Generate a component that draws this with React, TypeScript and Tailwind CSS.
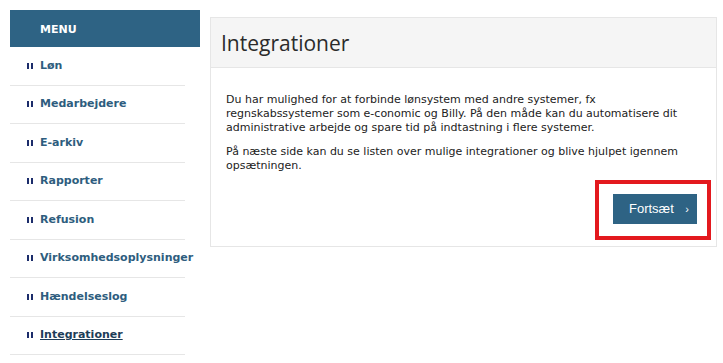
const menuItems = [
  "Løn",
  "Medarbejdere",
  "E-arkiv",
  "Rapporter",
  "Refusion",
  "Virksomhedsoplysninger",
  "Hændelseslog",
  "Integrationer",
];

function Bullet() {
  return (
    <span className="flex gap-[2px] mr-[7px]">
      <span className="w-[2px] h-[6px] bg-[#1c2d6b]" />
      <span className="w-[2px] h-[6px] bg-[#1c2d6b]" />
    </span>
  );
}

function Sidebar() {
  return (
    <aside className="w-[190px] shrink-0">
      <div className="h-[37px] bg-[#2e6384] flex items-center pl-[30px] pt-[3px] text-white font-bold text-[11px]">
        MENU
      </div>
      <ul className="w-[175px]">
        {menuItems.map((item) => {
          const active = item === "Integrationer";
          return (
            <li
              key={item}
              className="h-[38.5px] border-b border-[#e6e6e6] flex items-center pl-[17px]"
            >
              <Bullet />
              <span
                className={
                  active
                    ? "text-[11px] font-bold text-[#1d3c58] underline whitespace-nowrap"
                    : "text-[11px] font-bold text-[#2e5d7e] whitespace-nowrap"
                }
              >
                {item}
              </span>
            </li>
          );
        })}
      </ul>
    </aside>
  );
}

export default function App() {
  return (
    <div
      className="w-[723px] h-[363px] bg-white flex pt-[10px] pl-[10px] overflow-hidden"
      style={{ fontFamily: '"DejaVu Sans", Verdana, sans-serif' }}
    >
      <Sidebar />
      <main className="ml-[10px] mt-[7px] w-[507px] self-start border border-[#e6e6e6]">
        {/* Header */}
        <div className="h-[50px] bg-[#f5f5f5] border-b border-[#e6e6e6] flex items-center pl-[10px]">
          <h1
            className="text-[21px] text-[#2b2b2b] leading-none pt-[2px]"
            style={{ fontFamily: '"Open Sans", "Noto Sans", sans-serif' }}
          >
            Integrationer
          </h1>
        </div>

        {/* Body */}
        <div className="px-[15px] pt-[25px] pb-[22px] text-[11px] leading-[14px] text-[#222]">
          <p className="whitespace-nowrap">
            Du har mulighed for at forbinde lønsystem med andre systemer, fx
            <br />
            regnskabssystemer som e-conomic og Billy. På den måde kan du automatisere dit
            <br />
            administrative arbejde og spare tid på indtastning i flere systemer.
          </p>
          <p className="mt-[10px] whitespace-nowrap">
            På næste side kan du se listen over mulige integrationer og blive hjulpet igennem
            <br />
            opsætningen.
          </p>

          <div className="flex justify-end mt-[21px] pr-[4px]">
            <div className="relative">
              <button
                className="w-[84px] h-[30px] bg-[#2e6384] text-white flex items-center pl-[16px] text-[13px]"
                style={{ fontFamily: '"Liberation Sans", Arial, sans-serif' }}
              >
                <span>Fortsæt</span>
                <span className="ml-auto mr-[8px] text-[11px] leading-none">›</span>
              </button>
              {/* Highlight annotation */}
              <div className="absolute left-[-18px] top-[-14px] w-[116px] h-[60px] border-[4px] border-[#e3191e] pointer-events-none" />
            </div>
          </div>
        </div>
      </main>
    </div>
  );
}
